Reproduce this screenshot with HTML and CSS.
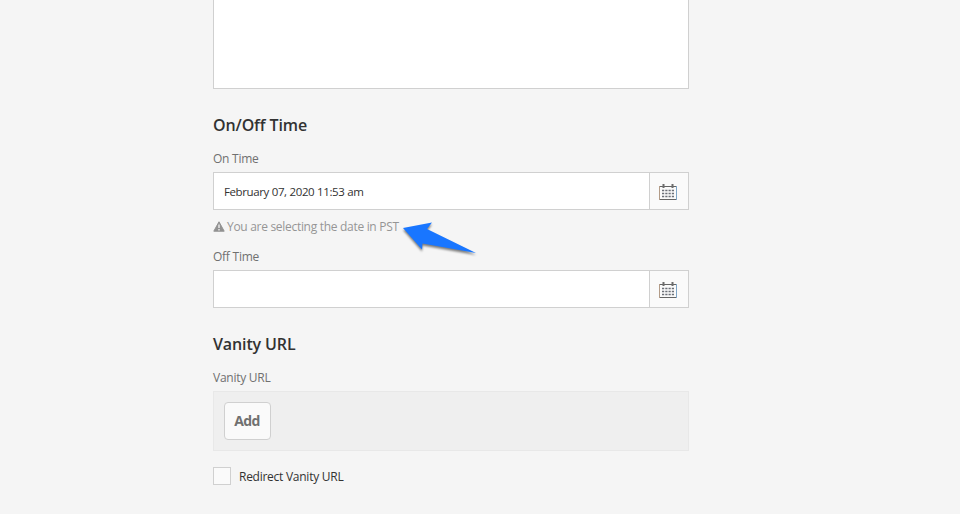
FILE: index.html
```html
<!DOCTYPE html>
<html lang="en">
<head>
<meta charset="utf-8">
<title>Page Properties</title>
<link rel="stylesheet" href="styles.css">
</head>
<body>
<svg class="defs" width="0" height="0" aria-hidden="true">
  <symbol id="calendar" viewBox="0 0 18 18">
    <path d="M.5 3v14" fill="none" stroke="#b39c88"/>
    <path d="M17.500 3v14" fill="none" stroke="#7fa6c8"/>
    <path d="M1 3.500h16M1 16.500h16" fill="none" stroke="#646464"/>
    <path d="M4.500 1v4M13.500 1v4" fill="none" stroke="#6c6c6c" stroke-width="2"/>
    <path d="M3 7.500h12M3 10.500h12M3 13.500h12" fill="none" stroke="#6c7078" stroke-width="1.700" stroke-dasharray="2.200 1.070"/>
  </symbol>
</svg>
<form class="form">
  <div class="textarea"></div>
  <h3>On/Off Time</h3>
  <label class="label on-time">On Time</label>
  <div class="date-field">
    <div class="value"><span class="date">February 07, 2020 11:53 am</span></div>
    <div class="picker"><svg width="18" height="18"><use href="#calendar"/></svg></div>
  </div>
  <div class="hint">
    <svg width="12" height="11" viewBox="0 0 12 11"><path d="M6 .8 11.200 10.200H.8z" fill="#929292" stroke="#929292" stroke-linejoin="round"/><path d="M6 3.500v3.500M6 8v1.500" stroke="#f5f5f5" stroke-width="1.300"/></svg>
    <span class="hint-text">You are selecting the date in PST</span>
    <svg class="arrow" width="80" height="42" viewBox="0 0 80 42"><path d="M3 10 32 4.500 27 11 76 35 22.500 25.500 22 31.500z" fill="#1976ff"/></svg>
  </div>
  <label class="label off-time">Off Time</label>
  <div class="date-field">
    <div class="value"></div>
    <div class="picker"><svg width="18" height="18"><use href="#calendar"/></svg></div>
  </div>
  <h3 class="vanity-title">Vanity URL</h3>
  <label class="label vanity">Vanity URL</label>
  <div class="multifield"><button type="button" class="add"><span>Add</span></button></div>
  <div class="check"><span class="box"></span><span class="check-text">Redirect Vanity URL</span></div>
</form>
</body>
</html>
```
FILE: styles.css
```css
* { box-sizing: border-box; }
body {
  margin: 0;
  height: 514px;
  overflow: hidden;
  background: #f5f5f5;
  color: #323232;
  font-family: "Open Sans", "Noto Sans", sans-serif;
  font-size: 12px;
}
.defs { position: absolute; }
svg { display: block; flex: none; }
.form { width: 476px; margin-left: 213px; white-space: nowrap; }
.textarea { height: 89px; background: #fff; border: 1px solid #d0d0d0; border-top: 0; }
h3 {
  margin: 24px 0 0;
  height: 24px;
  line-height: 24px;
  font-size: 16px;
  font-weight: 600;
  letter-spacing: -.12px;
}
.label { display: block; height: 18px; line-height: 18px; margin: 13px 0 4px; color: #707070; letter-spacing: -.25px; }
.date-field { display: flex; height: 38px; border: 1px solid #d0d0d0; background: #fff; }
.value { flex: 1; padding-left: 10px; line-height: 38px; }
.date { font-size: 11.5px; letter-spacing: -.4px; word-spacing: .3px; }
.picker { width: 39px; padding: 10px 0 0 9px; border-left: 1px solid #d0d0d0; background: #fafafa; }
.hint { position: relative; display: flex; align-items: center; gap: 2px; height: 18px; margin-top: 7px; color: #959595; }
.hint-text { letter-spacing: -.3px; }
.arrow { position: absolute; left: 187px; top: 1px; filter: drop-shadow(0 2px 1px rgba(0, 0, 0, .5)); }
.off-time { margin-top: 13px; }
.vanity-title { margin-top: 24px; }
.vanity { margin: 13px 0 4px; }
.multifield { height: 60px; padding: 10px; border: 1px solid #e8e8e8; background: #efefef; }
.add {
  display: block;
  width: 47px;
  height: 38px;
  padding: 0 1px 1px 0;
  border: 1px solid #d0d0d0;
  border-radius: 4px;
  background: #fafafa;
  color: #707070;
  font: 700 14px "Open Sans", sans-serif;
  letter-spacing: -.6px;
}
.check { display: flex; align-items: center; gap: 8px; margin-top: 16px; height: 18px; }
.box { width: 18px; height: 18px; border: 1px solid #d0d0d0; background: #fafafa; }
.check-text { letter-spacing: -.26px; }
```
